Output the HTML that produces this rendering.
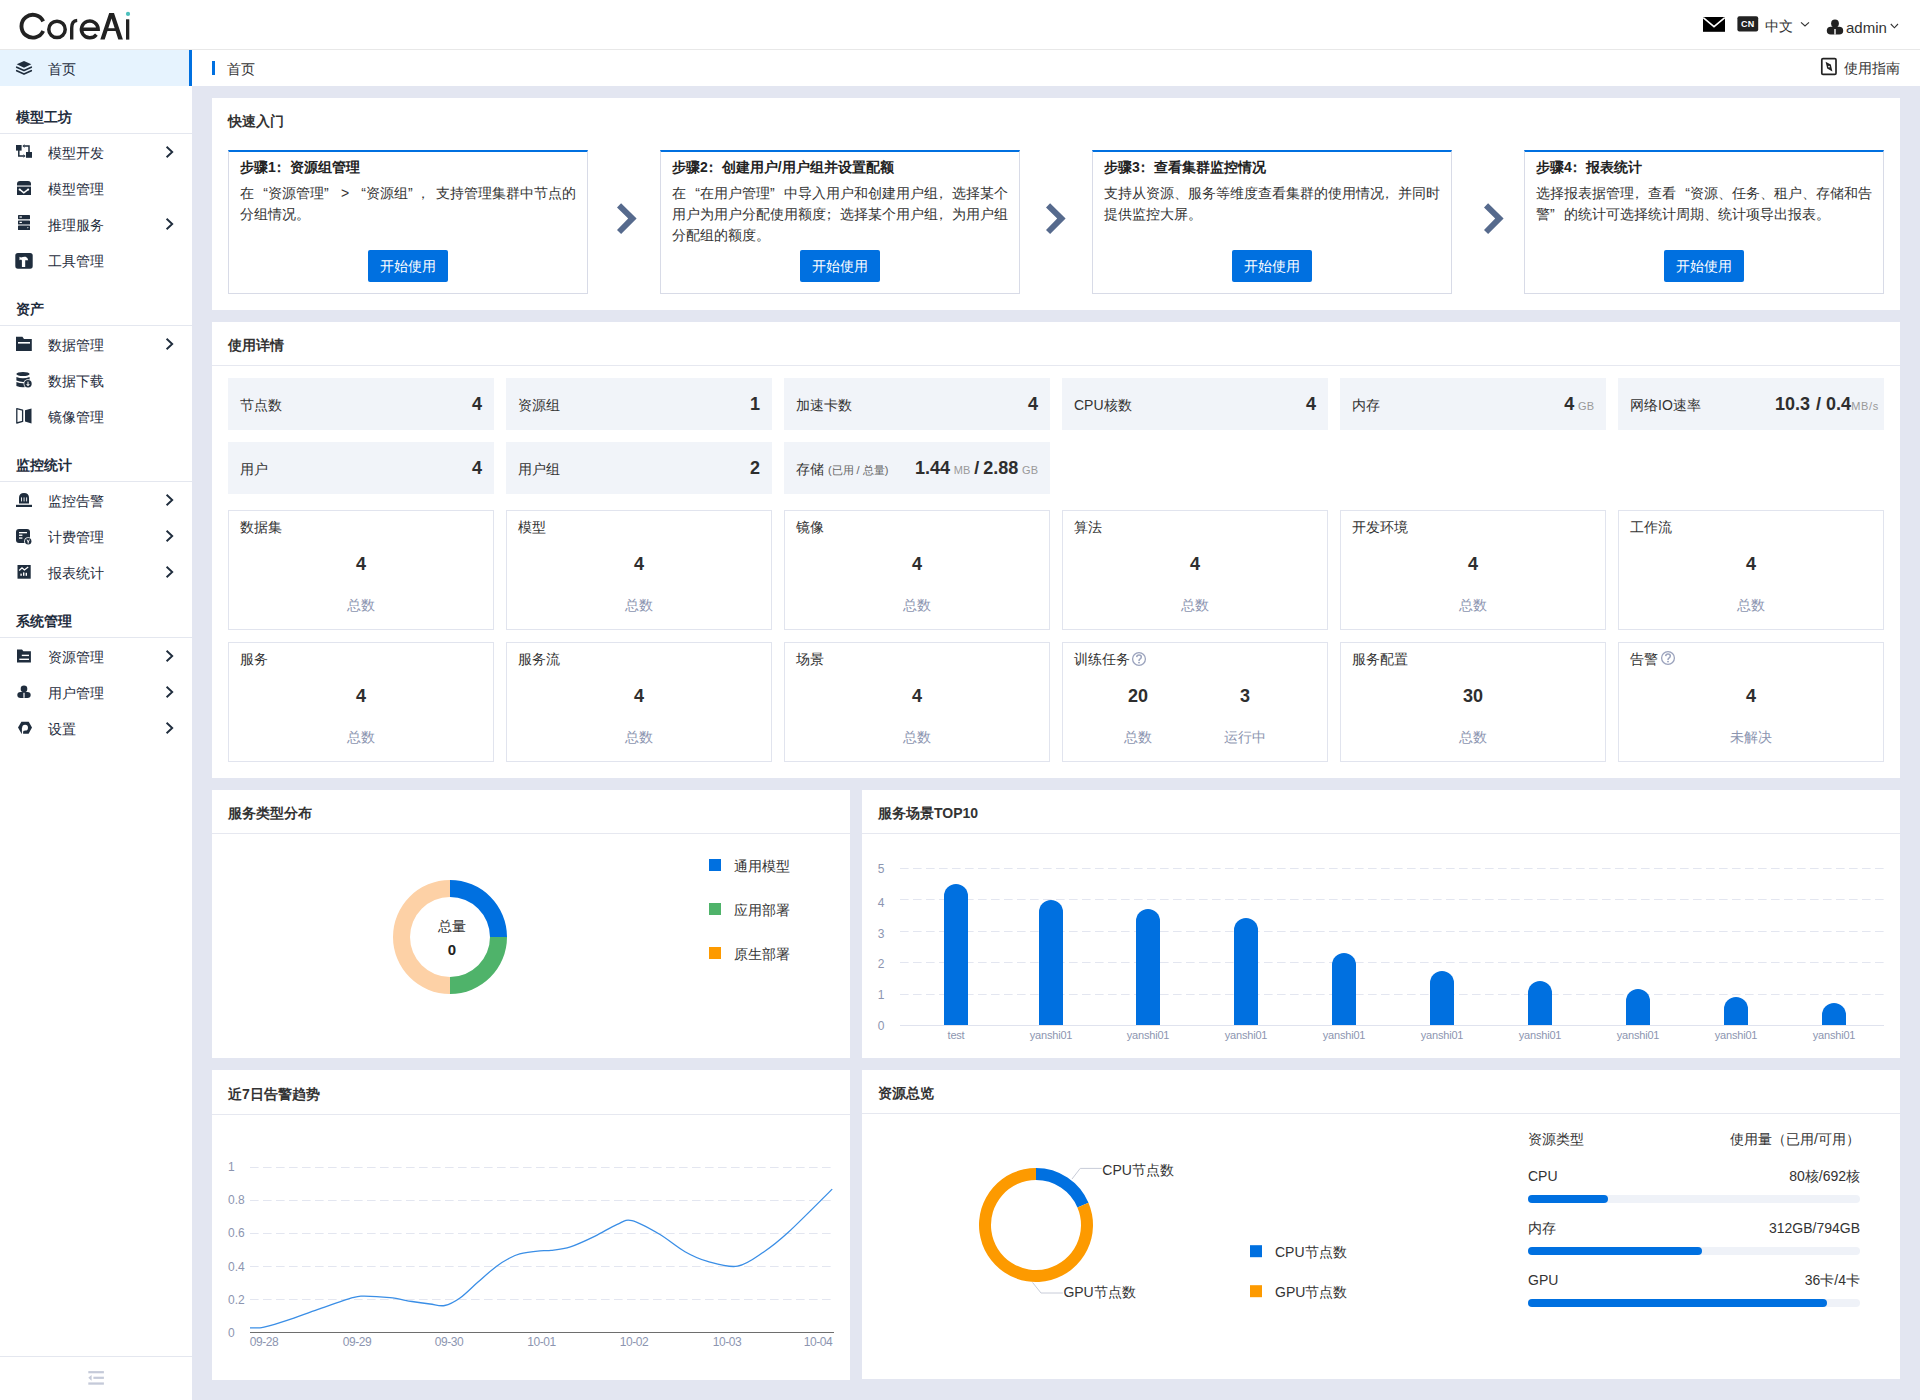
<!DOCTYPE html><html><head><meta charset="utf-8"><style>
*{margin:0;padding:0;box-sizing:border-box}
html,body{width:1920px;height:1400px;overflow:hidden}
body{position:relative;background:#e3e6f1;font-family:"Liberation Sans",sans-serif;font-size:14px;color:#333}
.t{position:absolute;white-space:nowrap}
.r{position:absolute}
svg{position:absolute;overflow:visible}
.q{display:inline-block;width:14px}
.ql{text-align:right}
.qr{text-align:left}
</style></head><body>
<div class="r" style="left:0px;top:0px;width:1920px;height:49px;background:#fff;"></div>
<div class="r" style="left:0px;top:49px;width:1920px;height:1px;background:#e8e8e8;"></div>
<svg style="left:0;top:0" width="200" height="50" viewBox="0 0 200 50">
<g fill="none" stroke="#222">
<path d="M43.2,21.4 A11.4,11.4 0 1 0 43.2,31.0" stroke-width="3.9"/>
<circle cx="57" cy="29.4" r="8.2" stroke-width="3.5"/>
<path d="M71.7,39.6 V28 C71.7,22.6 74,20.6 77.2,20.4" stroke-width="3.4"/>
<path d="M81.6,29.2 H98.2 A8.4,8.4 0 1 0 96.4,34.6" stroke-width="3.4"/>
</g>
<path fill="#222" fill-rule="evenodd" d="M100.3,39.6 L109.2,12.9 L114,12.9 L122.9,39.6 L118.3,39.6 L115.6,31 L107.5,31 L104.7,39.6 Z M108.3,28.2 L114.7,28.2 L111.5,18.6 Z"/>
<rect x="126" y="19.3" width="3.3" height="20.3" fill="#222"/>
<circle cx="128" cy="13.9" r="2.1" fill="#4cc0bd"/>
</svg>
<svg style="left:1700px;top:14px" width="30" height="22" viewBox="1700 14 30 22">
<rect x="1703" y="17" width="22" height="14.8" fill="#000"/>
<path d="M1703.2,17.6 L1714,26.6 L1724.8,17.6" fill="none" stroke="#fff" stroke-width="1.6"/>
</svg>
<svg style="left:1735px;top:14px" width="26" height="20" viewBox="1735 14 26 20">
<rect x="1737.4" y="16.2" width="20.8" height="15.3" rx="2" fill="#222"/>
<text x="1747.8" y="27.2" font-size="9" font-weight="bold" fill="#fff" text-anchor="middle" font-family="Liberation Sans" letter-spacing="0.3">CN</text>
</svg>
<div class="t" style="left:1765px;top:15.5px;font-size:14px;line-height:20px;color:#333;font-weight:normal;">中文</div>
<svg style="left:1798px;top:20px" width="14" height="10" viewBox="1798 20 14 10">
<path d="M1801,22.3 L1805,26 L1809,22.3" fill="none" stroke="#333" stroke-width="1.1"/>
</svg>
<svg style="left:1825px;top:17px" width="20" height="20" viewBox="1825 17 20 20">
<circle cx="1835" cy="23.4" r="3.9" fill="#222"/>
<path d="M1830.8,26.8 H1839.2 A4,4 0 0 1 1843.2,30.8 A4,3.8 0 0 1 1839.2,34.6 H1830.8 A4,3.8 0 0 1 1826.8,30.8 A4,4 0 0 1 1830.8,26.8 Z" fill="#222"/>
<rect x="1834.3" y="29" width="1.4" height="5.6" fill="#fff"/>
</svg>
<div class="t" style="left:1846px;top:17.8px;font-size:15px;line-height:20px;color:#333;font-weight:normal;">admin</div>
<svg style="left:1888px;top:21px" width="12" height="10" viewBox="1888 21 12 10">
<path d="M1890.8,24 L1894.4,27.8 L1898,24" fill="none" stroke="#333" stroke-width="1.1"/>
</svg>
<div class="r" style="left:0px;top:50px;width:192px;height:1350px;background:#fff;"></div>
<div class="r" style="left:0px;top:50px;width:189px;height:36px;background:#e6f3fe;"></div>
<div class="r" style="left:189px;top:50px;width:3px;height:36px;background:#0070e0;"></div>
<svg style="left:0;top:50px" width="40" height="36" viewBox="0 50 40 36"><g fill="#1f2d3d"><path d="M24,60.9 L31.3,64.3 L24,67.7 L16.7,64.3 Z"/><path d="M16.7,67.2 L24,70.6 L31.3,67.2" fill="none" stroke="#1f2d3d" stroke-width="1.6" stroke-linejoin="round" stroke-linecap="round"/><path d="M16.7,70.7 L24,74.1 L31.3,70.7" fill="none" stroke="#1f2d3d" stroke-width="1.6" stroke-linejoin="round" stroke-linecap="round"/></g></svg>
<div class="t" style="left:48px;top:58.5px;font-size:14px;line-height:20px;color:#1f2d3d;font-weight:normal;">首页</div>
<div class="t" style="left:16px;top:107.0px;font-size:14px;line-height:20px;color:#1f2d3d;font-weight:bold;">模型工坊</div>
<div class="r" style="left:0px;top:133px;width:192px;height:1px;background:#e4e7ef;"></div>
<svg style="left:0;top:134px" width="40" height="36" viewBox="0 134 40 36"><g fill="#1f2d3d"><rect x="16" y="145" width="5.6" height="5.6"/><rect x="26" y="152" width="6" height="5.8"/><path d="M18.8,150 V156 H23.6" fill="none" stroke="#1f2d3d" stroke-width="1.5"/><path d="M23.4,154.3 L25.6,156 L23.4,157.7 Z"/><path d="M29,152 V146 H24.4" fill="none" stroke="#1f2d3d" stroke-width="1.5"/><path d="M24.6,144.3 L22.4,146 L24.6,147.7 Z"/></g></svg>
<div class="t" style="left:48px;top:142.5px;font-size:14px;line-height:20px;color:#1f2d3d;font-weight:normal;">模型开发</div>
<svg style="left:160px;top:144px" width="20" height="16" viewBox="160 144 20 16"><path d="M166.6,146.8 L172.2,152 L166.6,157.2" fill="none" stroke="#1f2d3d" stroke-width="1.9"/></svg>
<svg style="left:0;top:170px" width="40" height="36" viewBox="0 170 40 36"><g fill="#1f2d3d"><path d="M17,185.4 V184 Q17,181 20,181 H28 Q31,181 31,184 V185.4 Z"/><path d="M17,186.6 H31 V195 H17 Z"/><path d="M19.6,189.4 L23.8,192.8 L28.2,189.4" fill="none" stroke="#fff" stroke-width="1.5"/><circle cx="19.6" cy="189.4" r="1" fill="#fff"/><circle cx="28.2" cy="189.4" r="1" fill="#fff"/></g></svg>
<div class="t" style="left:48px;top:178.5px;font-size:14px;line-height:20px;color:#1f2d3d;font-weight:normal;">模型管理</div>
<svg style="left:0;top:206px" width="40" height="36" viewBox="0 206 40 36"><g fill="#1f2d3d"><rect x="18" y="215" width="12" height="4.2" rx="0.6"/><rect x="18" y="220.4" width="12" height="4.2" rx="0.6"/><rect x="18" y="225.6" width="12" height="4.4" rx="0.6"/><rect x="19.5" y="216.4" width="2.4" height="1.2" fill="#fff"/><rect x="19.5" y="221.8" width="2.4" height="1.2" fill="#fff"/><path d="M27,227.2 L28.6,227.2 L27.8,228.6 Z" fill="#fff"/></g></svg>
<div class="t" style="left:48px;top:214.5px;font-size:14px;line-height:20px;color:#1f2d3d;font-weight:normal;">推理服务</div>
<svg style="left:160px;top:216px" width="20" height="16" viewBox="160 216 20 16"><path d="M166.6,218.8 L172.2,224 L166.6,229.2" fill="none" stroke="#1f2d3d" stroke-width="1.9"/></svg>
<svg style="left:0;top:242px" width="40" height="36" viewBox="0 242 40 36"><g fill="#1f2d3d"><rect x="15.3" y="253" width="17.4" height="15.7" rx="2.6"/><path d="M19.5,256.8 L21,257.5 Q23.5,256.4 25.6,256.7 Q27.8,257.4 28.2,260.3 H21.8 L21,259.6 L19.5,260.2 Z" fill="#fff"/><rect x="21.9" y="260" width="3.3" height="7" fill="#fff"/></g></svg>
<div class="t" style="left:48px;top:250.5px;font-size:14px;line-height:20px;color:#1f2d3d;font-weight:normal;">工具管理</div>
<div class="t" style="left:16px;top:299.0px;font-size:14px;line-height:20px;color:#1f2d3d;font-weight:bold;">资产</div>
<div class="r" style="left:0px;top:325px;width:192px;height:1px;background:#e4e7ef;"></div>
<svg style="left:0;top:326px" width="40" height="36" viewBox="0 326 40 36"><g fill="#1f2d3d"><path d="M16,336.8 H22.4 L24,339 H31.8 V350.9 H16 Z"/><rect x="18" y="342" width="12" height="1.6" fill="#fff"/></g></svg>
<div class="t" style="left:48px;top:334.5px;font-size:14px;line-height:20px;color:#1f2d3d;font-weight:normal;">数据管理</div>
<svg style="left:160px;top:336px" width="20" height="16" viewBox="160 336 20 16"><path d="M166.6,338.8 L172.2,344 L166.6,349.2" fill="none" stroke="#1f2d3d" stroke-width="1.9"/></svg>
<svg style="left:0;top:362px" width="40" height="36" viewBox="0 362 40 36"><g fill="#1f2d3d"><ellipse cx="23" cy="374" rx="6.6" ry="2.1"/><path d="M16.4,377 Q23,379.6 29.6,377 V380.6 Q23,383.2 16.4,380.6 Z"/><path d="M16.4,382 Q23,384.6 29.6,382 V386 Q23,388.6 16.4,386 Z"/><circle cx="28" cy="383.7" r="4.5" fill="#fff"/><circle cx="28" cy="383.7" r="3.7"/><rect x="27.5" y="381.6" width="1" height="2.8" fill="#fff"/><path d="M26,384.2 H30 L28,386.2 Z" fill="#fff"/></g></svg>
<div class="t" style="left:48px;top:370.5px;font-size:14px;line-height:20px;color:#1f2d3d;font-weight:normal;">数据下载</div>
<svg style="left:0;top:398px" width="40" height="36" viewBox="0 398 40 36"><g fill="#1f2d3d"><path d="M16.8,408.6 L22.6,410.2 V421.4 L16.8,423 Z" fill="none" stroke="#1f2d3d" stroke-width="1.3" stroke-linejoin="round"/><path d="M25,410.2 L31.5,408.4 V423.6 L25,421.6 Z"/></g></svg>
<div class="t" style="left:48px;top:406.5px;font-size:14px;line-height:20px;color:#1f2d3d;font-weight:normal;">镜像管理</div>
<div class="t" style="left:16px;top:455.0px;font-size:14px;line-height:20px;color:#1f2d3d;font-weight:bold;">监控统计</div>
<div class="r" style="left:0px;top:481px;width:192px;height:1px;background:#e4e7ef;"></div>
<svg style="left:0;top:482px" width="40" height="36" viewBox="0 482 40 36"><g fill="#1f2d3d"><path d="M19,503.5 V498 Q19,493 24,493 Q29,493 29,498 V503.5 Z"/><rect x="16" y="504.8" width="16" height="2.2"/><rect x="21" y="497.4" width="0.9" height="4" fill="#fff"/><rect x="23.6" y="497.4" width="0.9" height="4" fill="#fff"/><rect x="26.2" y="497.4" width="0.9" height="4" fill="#fff"/></g></svg>
<div class="t" style="left:48px;top:490.5px;font-size:14px;line-height:20px;color:#1f2d3d;font-weight:normal;">监控告警</div>
<svg style="left:160px;top:492px" width="20" height="16" viewBox="160 492 20 16"><path d="M166.6,494.8 L172.2,500 L166.6,505.2" fill="none" stroke="#1f2d3d" stroke-width="1.9"/></svg>
<svg style="left:0;top:518px" width="40" height="36" viewBox="0 518 40 36"><g fill="#1f2d3d"><rect x="16" y="529" width="14" height="14" rx="3"/><rect x="19" y="532" width="8" height="1.3" fill="#fff"/><rect x="19" y="534.6" width="3.4" height="1.3" fill="#fff"/><rect x="19" y="537.4" width="3.4" height="1.3" fill="#fff"/><circle cx="28.2" cy="541.2" r="4" fill="#fff"/><circle cx="28.2" cy="541.2" r="3.2"/><path d="M27,539.6 L28.2,542.2 L29.4,539.6 M28.2,542 V543.6" fill="none" stroke="#fff" stroke-width="0.9"/></g></svg>
<div class="t" style="left:48px;top:526.5px;font-size:14px;line-height:20px;color:#1f2d3d;font-weight:normal;">计费管理</div>
<svg style="left:160px;top:528px" width="20" height="16" viewBox="160 528 20 16"><path d="M166.6,530.8 L172.2,536 L166.6,541.2" fill="none" stroke="#1f2d3d" stroke-width="1.9"/></svg>
<svg style="left:0;top:554px" width="40" height="36" viewBox="0 554 40 36"><g fill="#1f2d3d"><rect x="17.5" y="565" width="13.2" height="13.7"/><path d="M19.2,570.4 L22,567.8 L24.4,570 L28.2,567" fill="none" stroke="#fff" stroke-width="1.3"/><rect x="20.4" y="573.6" width="1.4" height="2.2" fill="#fff"/><rect x="23" y="572.4" width="1.4" height="3.4" fill="#fff"/><rect x="25.6" y="572.8" width="1.4" height="3" fill="#fff"/></g></svg>
<div class="t" style="left:48px;top:562.5px;font-size:14px;line-height:20px;color:#1f2d3d;font-weight:normal;">报表统计</div>
<svg style="left:160px;top:564px" width="20" height="16" viewBox="160 564 20 16"><path d="M166.6,566.8 L172.2,572 L166.6,577.2" fill="none" stroke="#1f2d3d" stroke-width="1.9"/></svg>
<div class="t" style="left:16px;top:611.0px;font-size:14px;line-height:20px;color:#1f2d3d;font-weight:bold;">系统管理</div>
<div class="r" style="left:0px;top:637px;width:192px;height:1px;background:#e4e7ef;"></div>
<svg style="left:0;top:638px" width="40" height="36" viewBox="0 638 40 36"><g fill="#1f2d3d"><path d="M17,649.4 H22 L23.4,651.2 H30.9 V662.4 H17 Z"/><rect x="21.8" y="654.7" width="7.2" height="1.4" fill="#fff"/><rect x="19.3" y="658.6" width="9.7" height="1.4" fill="#fff"/></g></svg>
<div class="t" style="left:48px;top:646.5px;font-size:14px;line-height:20px;color:#1f2d3d;font-weight:normal;">资源管理</div>
<svg style="left:160px;top:648px" width="20" height="16" viewBox="160 648 20 16"><path d="M166.6,650.8 L172.2,656 L166.6,661.2" fill="none" stroke="#1f2d3d" stroke-width="1.9"/></svg>
<svg style="left:0;top:674px" width="40" height="36" viewBox="0 674 40 36"><g fill="#1f2d3d"><circle cx="24" cy="688.9" r="3.3"/><path d="M20.6,691.9 H27.4 A3.3,3 0 0 1 30.7,694.9 A3.3,3 0 0 1 27.4,697.9 H20.6 A3.3,3 0 0 1 17.3,694.9 A3.3,3 0 0 1 20.6,691.9 Z"/><rect x="23.4" y="692.8" width="1.2" height="5" fill="#fff"/></g></svg>
<div class="t" style="left:48px;top:682.5px;font-size:14px;line-height:20px;color:#1f2d3d;font-weight:normal;">用户管理</div>
<svg style="left:160px;top:684px" width="20" height="16" viewBox="160 684 20 16"><path d="M166.6,686.8 L172.2,692 L166.6,697.2" fill="none" stroke="#1f2d3d" stroke-width="1.9"/></svg>
<svg style="left:0;top:710px" width="40" height="36" viewBox="0 710 40 36"><g fill="#1f2d3d"><path d="M21.4,721.8 H28.7 L32,727.6 L28.6,733.7 H21.6 L18,727.6 Z"/><circle cx="25.1" cy="727.7" r="2.9" fill="#fff"/><path d="M21.9,727.7 H23.1 V734 H21.9 Z" fill="#fff"/><path d="M23.1,729.6 L24.8,730.6 L23.1,731.4 Z" fill="#fff"/></g></svg>
<div class="t" style="left:48px;top:718.5px;font-size:14px;line-height:20px;color:#1f2d3d;font-weight:normal;">设置</div>
<svg style="left:160px;top:720px" width="20" height="16" viewBox="160 720 20 16"><path d="M166.6,722.8 L172.2,728 L166.6,733.2" fill="none" stroke="#1f2d3d" stroke-width="1.9"/></svg>
<div class="r" style="left:0px;top:1356px;width:192px;height:1px;background:#e4e7ef;"></div>
<svg style="left:80px;top:1368px" width="30" height="20" viewBox="80 1368 30 20">
<g fill="#c5cad9"><rect x="88.3" y="1371.1" width="15.6" height="2.2"/><rect x="93.4" y="1376.7" width="10.5" height="2.2"/><rect x="88.3" y="1382.4" width="15.6" height="2.3"/><path d="M88.3,1377.8 L91.6,1374.9 V1380.7 Z"/></g>
</svg>
<div class="r" style="left:192px;top:50px;width:1728px;height:36px;background:#fff;"></div>
<div class="r" style="left:212px;top:61px;width:3px;height:14px;background:#0070e0;"></div>
<div class="t" style="left:227px;top:58.5px;font-size:14px;line-height:20px;color:#333;font-weight:normal;">首页</div>
<svg style="left:1818px;top:55px" width="22" height="24" viewBox="1818 55 22 24">
<rect x="1821.8" y="58.6" width="14.2" height="15.8" rx="1.2" fill="none" stroke="#222" stroke-width="1.7"/>
<path d="M1825.6,61.8 L1830.8,64.6 L1832.4,71.6 L1827.2,68.6 Z" fill="#222"/><circle cx="1829" cy="66.6" r="0.9" fill="#fff"/>
</svg>
<div class="t" style="left:1844px;top:57.5px;font-size:14px;line-height:20px;color:#333;font-weight:normal;">使用指南</div>
<div class="r" style="left:212px;top:98px;width:1688px;height:212px;background:#fff;"></div>
<div class="t" style="left:228px;top:110.5px;font-size:14px;line-height:20px;color:#333;font-weight:bold;">快速入门</div>
<div class="r" style="left:228px;top:150px;width:360px;height:144px;background:#fff;border:1px solid #d8dbe7;border-top:2px solid #0070e0;"></div>
<div class="t" style="left:240px;top:157.0px;font-size:14px;line-height:20px;color:#222;font-weight:bold;">步骤1<span style="position:relative;left:-4px">：</span>资源组管理</div>
<div class="t" style="left:240px;top:182.5px;font-size:14px;line-height:21px;color:#333;font-weight:normal;">在<span class="q ql">“</span>资源管理<span class="q qr">”</span><span class="q" style="text-align:center">&gt;</span><span class="q ql">“</span>资源组<span class="q qr">”</span><span class="q" style="position:relative;left:-2px"><span style="position:relative;left:-4px">，</span></span>支持管理集群中节点的</div>
<div class="t" style="left:240px;top:203.5px;font-size:14px;line-height:21px;color:#333;font-weight:normal;">分组情况。</div>
<div class="r" style="left:368px;top:250px;width:80px;height:32px;background:#0070e0;border-radius:2px;"></div>
<div class="t" style="left:368.0px;width:80px;text-align:center;top:256.0px;font-size:14px;line-height:20px;color:#fff;font-weight:normal;">开始使用</div>
<svg style="left:612.4px;top:198px" width="30" height="42" viewBox="612.4 198 30 42"><path d="M621.5,203.2 L637.0,218.6 L621.5,234.1 L617.4,230.1 L628.6,218.6 L617.4,207.4 Z" fill="#566a8d"/></svg>
<div class="r" style="left:660px;top:150px;width:360px;height:144px;background:#fff;border:1px solid #d8dbe7;border-top:2px solid #0070e0;"></div>
<div class="t" style="left:672px;top:157.0px;font-size:14px;line-height:20px;color:#222;font-weight:bold;">步骤2<span style="position:relative;left:-4px">：</span>创建用户/用户组并设置配额</div>
<div class="t" style="left:672px;top:182.5px;font-size:14px;line-height:21px;color:#333;font-weight:normal;">在<span class="q ql">“</span>在用户管理<span class="q qr">”</span>中导入用户和创建用户组<span style="position:relative;left:-4px">，</span>选择某个</div>
<div class="t" style="left:672px;top:203.5px;font-size:14px;line-height:21px;color:#333;font-weight:normal;">用户为用户分配使用额度<span style="position:relative;left:-4px">；</span>选择某个用户组<span style="position:relative;left:-4px">，</span>为用户组</div>
<div class="t" style="left:672px;top:224.5px;font-size:14px;line-height:21px;color:#333;font-weight:normal;">分配组的额度。</div>
<div class="r" style="left:800px;top:250px;width:80px;height:32px;background:#0070e0;border-radius:2px;"></div>
<div class="t" style="left:800.0px;width:80px;text-align:center;top:256.0px;font-size:14px;line-height:20px;color:#fff;font-weight:normal;">开始使用</div>
<svg style="left:1041.4px;top:198px" width="30" height="42" viewBox="1041.4 198 30 42"><path d="M1050.5,203.2 L1066.0,218.6 L1050.5,234.1 L1046.4,230.1 L1057.6000000000001,218.6 L1046.4,207.4 Z" fill="#566a8d"/></svg>
<div class="r" style="left:1092px;top:150px;width:360px;height:144px;background:#fff;border:1px solid #d8dbe7;border-top:2px solid #0070e0;"></div>
<div class="t" style="left:1104px;top:157.0px;font-size:14px;line-height:20px;color:#222;font-weight:bold;">步骤3<span style="position:relative;left:-4px">：</span>查看集群监控情况</div>
<div class="t" style="left:1104px;top:182.5px;font-size:14px;line-height:21px;color:#333;font-weight:normal;">支持从资源、服务等维度查看集群的使用情况<span style="position:relative;left:-4px">，</span>并同时</div>
<div class="t" style="left:1104px;top:203.5px;font-size:14px;line-height:21px;color:#333;font-weight:normal;">提供监控大屏。</div>
<div class="r" style="left:1232px;top:250px;width:80px;height:32px;background:#0070e0;border-radius:2px;"></div>
<div class="t" style="left:1232.0px;width:80px;text-align:center;top:256.0px;font-size:14px;line-height:20px;color:#fff;font-weight:normal;">开始使用</div>
<svg style="left:1479.3px;top:198px" width="30" height="42" viewBox="1479.3 198 30 42"><path d="M1488.3999999999999,203.2 L1503.8999999999999,218.6 L1488.3999999999999,234.1 L1484.3,230.1 L1495.5,218.6 L1484.3,207.4 Z" fill="#566a8d"/></svg>
<div class="r" style="left:1524px;top:150px;width:360px;height:144px;background:#fff;border:1px solid #d8dbe7;border-top:2px solid #0070e0;"></div>
<div class="t" style="left:1536px;top:157.0px;font-size:14px;line-height:20px;color:#222;font-weight:bold;">步骤4<span style="position:relative;left:-4px">：</span>报表统计</div>
<div class="t" style="left:1536px;top:182.5px;font-size:14px;line-height:21px;color:#333;font-weight:normal;">选择报表据管理<span style="position:relative;left:-4px">，</span>查看<span class="q ql">“</span>资源、任务、租户、存储和告</div>
<div class="t" style="left:1536px;top:203.5px;font-size:14px;line-height:21px;color:#333;font-weight:normal;">警<span class="q qr">”</span>的统计可选择统计周期、统计项导出报表。</div>
<div class="r" style="left:1664px;top:250px;width:80px;height:32px;background:#0070e0;border-radius:2px;"></div>
<div class="t" style="left:1664.0px;width:80px;text-align:center;top:256.0px;font-size:14px;line-height:20px;color:#fff;font-weight:normal;">开始使用</div>
<div class="r" style="left:212px;top:322px;width:1688px;height:456px;background:#fff;"></div>
<div class="t" style="left:228px;top:335.0px;font-size:14px;line-height:20px;color:#333;font-weight:bold;">使用详情</div>
<div class="r" style="left:212px;top:365px;width:1688px;height:1px;background:#e6e8f0;"></div>
<div class="r" style="left:228px;top:378px;width:266px;height:52px;background:#f1f4f9;"></div>
<div class="t" style="left:240px;top:395.0px;font-size:14px;line-height:20px;color:#333;font-weight:normal;">节点数</div>
<div class="t" style="left:232px;width:250px;text-align:right;top:392.0px;font-size:14px;line-height:24px;color:#333;font-weight:normal;"><span style="font-size:18px;font-weight:bold;color:#2e2e2e">4</span></div>
<div class="r" style="left:506px;top:378px;width:266px;height:52px;background:#f1f4f9;"></div>
<div class="t" style="left:518px;top:395.0px;font-size:14px;line-height:20px;color:#333;font-weight:normal;">资源组</div>
<div class="t" style="left:510px;width:250px;text-align:right;top:392.0px;font-size:14px;line-height:24px;color:#333;font-weight:normal;"><span style="font-size:18px;font-weight:bold;color:#2e2e2e">1</span></div>
<div class="r" style="left:784px;top:378px;width:266px;height:52px;background:#f1f4f9;"></div>
<div class="t" style="left:796px;top:395.0px;font-size:14px;line-height:20px;color:#333;font-weight:normal;">加速卡数</div>
<div class="t" style="left:788px;width:250px;text-align:right;top:392.0px;font-size:14px;line-height:24px;color:#333;font-weight:normal;"><span style="font-size:18px;font-weight:bold;color:#2e2e2e">4</span></div>
<div class="r" style="left:1062px;top:378px;width:266px;height:52px;background:#f1f4f9;"></div>
<div class="t" style="left:1074px;top:395.0px;font-size:14px;line-height:20px;color:#333;font-weight:normal;">CPU核数</div>
<div class="t" style="left:1066px;width:250px;text-align:right;top:392.0px;font-size:14px;line-height:24px;color:#333;font-weight:normal;"><span style="font-size:18px;font-weight:bold;color:#2e2e2e">4</span></div>
<div class="r" style="left:1340px;top:378px;width:266px;height:52px;background:#f1f4f9;"></div>
<div class="t" style="left:1352px;top:395.0px;font-size:14px;line-height:20px;color:#333;font-weight:normal;">内存</div>
<div class="t" style="left:1344px;width:250px;text-align:right;top:392.0px;font-size:14px;line-height:24px;color:#333;font-weight:normal;"><span style="font-size:18px;font-weight:bold;color:#2e2e2e">4</span> <span style="font-size:11px;color:#999">GB</span></div>
<div class="r" style="left:1618px;top:378px;width:266px;height:52px;background:#f1f4f9;"></div>
<div class="t" style="left:1630px;top:395.0px;font-size:14px;line-height:20px;color:#333;font-weight:normal;">网络IO速率</div>
<div class="t" style="left:1629px;width:250px;text-align:right;top:392.0px;font-size:14px;line-height:24px;color:#333;font-weight:normal;"><span style="font-size:18px;font-weight:bold;color:#2e2e2e">10.3</span><span style="display:inline-block;width:6px"></span><span style="font-size:18px;font-weight:bold;color:#2e2e2e">/</span><span style="display:inline-block;width:5px"></span><span style="font-size:18px;font-weight:bold;color:#2e2e2e">0.4</span><span style="font-size:11px;color:#999;letter-spacing:0.7px">MB/s</span></div>
<div class="r" style="left:228px;top:442px;width:266px;height:52px;background:#f1f4f9;"></div>
<div class="t" style="left:240px;top:459.0px;font-size:14px;line-height:20px;color:#333;font-weight:normal;">用户</div>
<div class="t" style="left:232px;width:250px;text-align:right;top:456.0px;font-size:14px;line-height:24px;color:#333;font-weight:normal;"><span style="font-size:18px;font-weight:bold;color:#2e2e2e">4</span></div>
<div class="r" style="left:506px;top:442px;width:266px;height:52px;background:#f1f4f9;"></div>
<div class="t" style="left:518px;top:459.0px;font-size:14px;line-height:20px;color:#333;font-weight:normal;">用户组</div>
<div class="t" style="left:510px;width:250px;text-align:right;top:456.0px;font-size:14px;line-height:24px;color:#333;font-weight:normal;"><span style="font-size:18px;font-weight:bold;color:#2e2e2e">2</span></div>
<div class="r" style="left:784px;top:442px;width:266px;height:52px;background:#f1f4f9;"></div>
<div class="t" style="left:796px;top:459.0px;font-size:14px;line-height:20px;color:#333;font-weight:normal;">存储 <span style="font-size:11px;color:#666">(已用 / 总量)</span></div>
<div class="t" style="left:788px;width:250px;text-align:right;top:456.0px;font-size:14px;line-height:24px;color:#333;font-weight:normal;"><span style="font-size:18px;font-weight:bold;color:#2e2e2e">1.44</span> <span style="font-size:11px;color:#999">MB</span> <span style="font-size:18px;font-weight:bold;color:#2e2e2e">/</span>&nbsp;<span style="font-size:18px;font-weight:bold;color:#2e2e2e">2.88</span> <span style="font-size:11px;color:#999">GB</span></div>
<div class="r" style="left:228px;top:510px;width:266px;height:120px;background:#fff;border:1px solid #e1e4ee;"></div>
<div class="t" style="left:240px;top:517.0px;font-size:14px;line-height:20px;color:#333;font-weight:normal;">数据集</div>
<div class="t" style="left:261.0px;width:200px;text-align:center;top:552.0px;font-size:18px;line-height:24px;color:#2e2e2e;font-weight:bold;">4</div>
<div class="t" style="left:261.0px;width:200px;text-align:center;top:594.5px;font-size:14px;line-height:20px;color:#8c95b0;font-weight:normal;">总数</div>
<div class="r" style="left:506px;top:510px;width:266px;height:120px;background:#fff;border:1px solid #e1e4ee;"></div>
<div class="t" style="left:518px;top:517.0px;font-size:14px;line-height:20px;color:#333;font-weight:normal;">模型</div>
<div class="t" style="left:539.0px;width:200px;text-align:center;top:552.0px;font-size:18px;line-height:24px;color:#2e2e2e;font-weight:bold;">4</div>
<div class="t" style="left:539.0px;width:200px;text-align:center;top:594.5px;font-size:14px;line-height:20px;color:#8c95b0;font-weight:normal;">总数</div>
<div class="r" style="left:784px;top:510px;width:266px;height:120px;background:#fff;border:1px solid #e1e4ee;"></div>
<div class="t" style="left:796px;top:517.0px;font-size:14px;line-height:20px;color:#333;font-weight:normal;">镜像</div>
<div class="t" style="left:817.0px;width:200px;text-align:center;top:552.0px;font-size:18px;line-height:24px;color:#2e2e2e;font-weight:bold;">4</div>
<div class="t" style="left:817.0px;width:200px;text-align:center;top:594.5px;font-size:14px;line-height:20px;color:#8c95b0;font-weight:normal;">总数</div>
<div class="r" style="left:1062px;top:510px;width:266px;height:120px;background:#fff;border:1px solid #e1e4ee;"></div>
<div class="t" style="left:1074px;top:517.0px;font-size:14px;line-height:20px;color:#333;font-weight:normal;">算法</div>
<div class="t" style="left:1095.0px;width:200px;text-align:center;top:552.0px;font-size:18px;line-height:24px;color:#2e2e2e;font-weight:bold;">4</div>
<div class="t" style="left:1095.0px;width:200px;text-align:center;top:594.5px;font-size:14px;line-height:20px;color:#8c95b0;font-weight:normal;">总数</div>
<div class="r" style="left:1340px;top:510px;width:266px;height:120px;background:#fff;border:1px solid #e1e4ee;"></div>
<div class="t" style="left:1352px;top:517.0px;font-size:14px;line-height:20px;color:#333;font-weight:normal;">开发环境</div>
<div class="t" style="left:1373.0px;width:200px;text-align:center;top:552.0px;font-size:18px;line-height:24px;color:#2e2e2e;font-weight:bold;">4</div>
<div class="t" style="left:1373.0px;width:200px;text-align:center;top:594.5px;font-size:14px;line-height:20px;color:#8c95b0;font-weight:normal;">总数</div>
<div class="r" style="left:1618px;top:510px;width:266px;height:120px;background:#fff;border:1px solid #e1e4ee;"></div>
<div class="t" style="left:1630px;top:517.0px;font-size:14px;line-height:20px;color:#333;font-weight:normal;">工作流</div>
<div class="t" style="left:1651.0px;width:200px;text-align:center;top:552.0px;font-size:18px;line-height:24px;color:#2e2e2e;font-weight:bold;">4</div>
<div class="t" style="left:1651.0px;width:200px;text-align:center;top:594.5px;font-size:14px;line-height:20px;color:#8c95b0;font-weight:normal;">总数</div>
<div class="r" style="left:228px;top:642px;width:266px;height:120px;background:#fff;border:1px solid #e1e4ee;"></div>
<div class="t" style="left:240px;top:649.0px;font-size:14px;line-height:20px;color:#333;font-weight:normal;">服务</div>
<div class="t" style="left:261.0px;width:200px;text-align:center;top:684.0px;font-size:18px;line-height:24px;color:#2e2e2e;font-weight:bold;">4</div>
<div class="t" style="left:261.0px;width:200px;text-align:center;top:726.5px;font-size:14px;line-height:20px;color:#8c95b0;font-weight:normal;">总数</div>
<div class="r" style="left:506px;top:642px;width:266px;height:120px;background:#fff;border:1px solid #e1e4ee;"></div>
<div class="t" style="left:518px;top:649.0px;font-size:14px;line-height:20px;color:#333;font-weight:normal;">服务流</div>
<div class="t" style="left:539.0px;width:200px;text-align:center;top:684.0px;font-size:18px;line-height:24px;color:#2e2e2e;font-weight:bold;">4</div>
<div class="t" style="left:539.0px;width:200px;text-align:center;top:726.5px;font-size:14px;line-height:20px;color:#8c95b0;font-weight:normal;">总数</div>
<div class="r" style="left:784px;top:642px;width:266px;height:120px;background:#fff;border:1px solid #e1e4ee;"></div>
<div class="t" style="left:796px;top:649.0px;font-size:14px;line-height:20px;color:#333;font-weight:normal;">场景</div>
<div class="t" style="left:817.0px;width:200px;text-align:center;top:684.0px;font-size:18px;line-height:24px;color:#2e2e2e;font-weight:bold;">4</div>
<div class="t" style="left:817.0px;width:200px;text-align:center;top:726.5px;font-size:14px;line-height:20px;color:#8c95b0;font-weight:normal;">总数</div>
<div class="r" style="left:1062px;top:642px;width:266px;height:120px;background:#fff;border:1px solid #e1e4ee;"></div>
<div class="t" style="left:1074px;top:649.0px;font-size:14px;line-height:20px;color:#333;font-weight:normal;">训练任务</div>
<div class="t" style="left:1098.0px;width:80px;text-align:center;top:684.0px;font-size:18px;line-height:24px;color:#2e2e2e;font-weight:bold;">20</div>
<div class="t" style="left:1205.0px;width:80px;text-align:center;top:684.0px;font-size:18px;line-height:24px;color:#2e2e2e;font-weight:bold;">3</div>
<div class="t" style="left:1098.0px;width:80px;text-align:center;top:726.5px;font-size:14px;line-height:20px;color:#8c95b0;font-weight:normal;">总数</div>
<div class="t" style="left:1205.0px;width:80px;text-align:center;top:726.5px;font-size:14px;line-height:20px;color:#8c95b0;font-weight:normal;">运行中</div>
<div class="r" style="left:1340px;top:642px;width:266px;height:120px;background:#fff;border:1px solid #e1e4ee;"></div>
<div class="t" style="left:1352px;top:649.0px;font-size:14px;line-height:20px;color:#333;font-weight:normal;">服务配置</div>
<div class="t" style="left:1373.0px;width:200px;text-align:center;top:684.0px;font-size:18px;line-height:24px;color:#2e2e2e;font-weight:bold;">30</div>
<div class="t" style="left:1373.0px;width:200px;text-align:center;top:726.5px;font-size:14px;line-height:20px;color:#8c95b0;font-weight:normal;">总数</div>
<div class="r" style="left:1618px;top:642px;width:266px;height:120px;background:#fff;border:1px solid #e1e4ee;"></div>
<div class="t" style="left:1630px;top:649.0px;font-size:14px;line-height:20px;color:#333;font-weight:normal;">告警</div>
<div class="t" style="left:1651.0px;width:200px;text-align:center;top:684.0px;font-size:18px;line-height:24px;color:#2e2e2e;font-weight:bold;">4</div>
<div class="t" style="left:1651.0px;width:200px;text-align:center;top:726.5px;font-size:14px;line-height:20px;color:#8c95b0;font-weight:normal;">未解决</div>
<svg style="left:1130px;top:650px" width="18" height="18" viewBox="1130 650 18 18"><circle cx="1139" cy="659" r="6.4" fill="none" stroke="#9ba3bd" stroke-width="1.3"/><path d="M1136.7,657.1 Q1136.9,655.1 1139,655.1 Q1141.3,655.1 1141.3,657 Q1141.3,658.2 1139.9,659.1 Q1139,659.7 1139,660.9" fill="none" stroke="#9ba3bd" stroke-width="1.5"/><circle cx="1139" cy="662.6" r="0.95" fill="#9ba3bd"/></svg>
<svg style="left:1659px;top:649px" width="18" height="18" viewBox="1659 649 18 18"><circle cx="1668" cy="658" r="6.4" fill="none" stroke="#9ba3bd" stroke-width="1.3"/><path d="M1665.7,656.1 Q1665.9,654.1 1668,654.1 Q1670.3,654.1 1670.3,656 Q1670.3,657.2 1668.9,658.1 Q1668,658.7 1668,659.9" fill="none" stroke="#9ba3bd" stroke-width="1.5"/><circle cx="1668" cy="661.6" r="0.95" fill="#9ba3bd"/></svg>
<div class="r" style="left:212px;top:790px;width:638px;height:268px;background:#fff;"></div>
<div class="t" style="left:228px;top:802.5px;font-size:14px;line-height:20px;color:#333;font-weight:bold;">服务类型分布</div>
<div class="r" style="left:212px;top:833px;width:638px;height:1px;background:#e6e8f0;"></div>
<div class="r" style="left:862px;top:790px;width:1038px;height:268px;background:#fff;"></div>
<div class="t" style="left:878px;top:802.5px;font-size:14px;line-height:20px;color:#333;font-weight:bold;">服务场景TOP10</div>
<div class="r" style="left:862px;top:833px;width:1038px;height:1px;background:#e6e8f0;"></div>
<div class="r" style="left:212px;top:1070px;width:638px;height:310px;background:#fff;"></div>
<div class="t" style="left:228px;top:1083.5px;font-size:14px;line-height:20px;color:#333;font-weight:bold;">近7日告警趋势</div>
<div class="r" style="left:212px;top:1114px;width:638px;height:1px;background:#e6e8f0;"></div>
<div class="r" style="left:862px;top:1070px;width:1038px;height:309px;background:#fff;"></div>
<div class="t" style="left:878px;top:1083.0px;font-size:14px;line-height:20px;color:#333;font-weight:bold;">资源总览</div>
<div class="r" style="left:862px;top:1113px;width:1038px;height:1px;background:#e6e8f0;"></div>
<svg style="left:0;top:0" width="1920" height="1400" viewBox="0 0 1920 1400">
<path d="M450.00,880.00 A57,57 0 0 1 507.00,937.00 L490.00,937.00 A40,40 0 0 0 450.00,897.00 Z" fill="#0070e0"/>
<path d="M507.00,937.00 A57,57 0 0 1 450.00,994.00 L450.00,977.00 A40,40 0 0 0 490.00,937.00 Z" fill="#4fb36a"/>
<path d="M450.00,994.00 A57,57 0 0 1 449.99,880.00 L449.99,897.00 A40,40 0 0 0 450.00,977.00 Z" fill="#fdd1a6"/>
<rect x="709" y="859" width="12" height="12" fill="#0070e0"/>
<rect x="709" y="903" width="12" height="12" fill="#4fb36a"/>
<rect x="709" y="947" width="12" height="12" fill="#fd9a00"/>
</svg>
<div class="t" style="left:734px;top:855.5px;font-size:14px;line-height:20px;color:#333;font-weight:normal;">通用模型</div>
<div class="t" style="left:734px;top:899.5px;font-size:14px;line-height:20px;color:#333;font-weight:normal;">应用部署</div>
<div class="t" style="left:734px;top:943.5px;font-size:14px;line-height:20px;color:#333;font-weight:normal;">原生部署</div>
<div class="t" style="left:422.0px;width:60px;text-align:center;top:916.0px;font-size:14px;line-height:20px;color:#333;font-weight:normal;">总量</div>
<div class="t" style="left:422.0px;width:60px;text-align:center;top:939.5px;font-size:15px;line-height:20px;color:#222;font-weight:bold;">0</div>
<svg style="left:0;top:0" width="1920" height="1400" viewBox="0 0 1920 1400">
<line x1="900" y1="868.5" x2="1884" y2="868.5" stroke="#e3e6f0" stroke-width="1" stroke-dasharray="8.6,4.4"/>
<line x1="900" y1="899.5" x2="1884" y2="899.5" stroke="#e3e6f0" stroke-width="1" stroke-dasharray="8.6,4.4"/>
<line x1="900" y1="931.5" x2="1884" y2="931.5" stroke="#e3e6f0" stroke-width="1" stroke-dasharray="8.6,4.4"/>
<line x1="900" y1="962.5" x2="1884" y2="962.5" stroke="#e3e6f0" stroke-width="1" stroke-dasharray="8.6,4.4"/>
<line x1="900" y1="994.5" x2="1884" y2="994.5" stroke="#e3e6f0" stroke-width="1" stroke-dasharray="8.6,4.4"/>
<line x1="900" y1="1025.5" x2="1884" y2="1025.5" stroke="#e0e3ee" stroke-width="1"/>
<path d="M944,1025 V896 A12,12 0 0 1 968,896 V1025 Z" fill="#0070e0"/>
<path d="M1039,1025 V912 A12,12 0 0 1 1063,912 V1025 Z" fill="#0070e0"/>
<path d="M1136,1025 V921 A12,12 0 0 1 1160,921 V1025 Z" fill="#0070e0"/>
<path d="M1234,1025 V930 A12,12 0 0 1 1258,930 V1025 Z" fill="#0070e0"/>
<path d="M1332,1025 V965 A12,12 0 0 1 1356,965 V1025 Z" fill="#0070e0"/>
<path d="M1430,1025 V983 A12,12 0 0 1 1454,983 V1025 Z" fill="#0070e0"/>
<path d="M1528,1025 V993 A12,12 0 0 1 1552,993 V1025 Z" fill="#0070e0"/>
<path d="M1626,1025 V1001 A12,12 0 0 1 1650,1001 V1025 Z" fill="#0070e0"/>
<path d="M1724,1025 V1009 A12,12 0 0 1 1748,1009 V1025 Z" fill="#0070e0"/>
<path d="M1822,1025 V1015 A12,12 0 0 1 1846,1015 V1025 Z" fill="#0070e0"/>
</svg>
<div class="t" style="left:871.0px;width:20px;text-align:center;top:862.2px;font-size:12px;line-height:14px;color:#8c95b0;font-weight:normal;">5</div>
<div class="t" style="left:871.0px;width:20px;text-align:center;top:896.2px;font-size:12px;line-height:14px;color:#8c95b0;font-weight:normal;">4</div>
<div class="t" style="left:871.0px;width:20px;text-align:center;top:927.4px;font-size:12px;line-height:14px;color:#8c95b0;font-weight:normal;">3</div>
<div class="t" style="left:871.0px;width:20px;text-align:center;top:957.2px;font-size:12px;line-height:14px;color:#8c95b0;font-weight:normal;">2</div>
<div class="t" style="left:871.0px;width:20px;text-align:center;top:988.4px;font-size:12px;line-height:14px;color:#8c95b0;font-weight:normal;">1</div>
<div class="t" style="left:871.0px;width:20px;text-align:center;top:1019.0px;font-size:12px;line-height:14px;color:#8c95b0;font-weight:normal;">0</div>
<div class="t" style="left:916.0px;width:80px;text-align:center;top:1028.0px;font-size:11px;line-height:14px;color:#8c95b0;font-weight:normal;letter-spacing:-0.2px;">test</div>
<div class="t" style="left:1011.0px;width:80px;text-align:center;top:1028.0px;font-size:11px;line-height:14px;color:#8c95b0;font-weight:normal;letter-spacing:-0.2px;">yanshi01</div>
<div class="t" style="left:1108.0px;width:80px;text-align:center;top:1028.0px;font-size:11px;line-height:14px;color:#8c95b0;font-weight:normal;letter-spacing:-0.2px;">yanshi01</div>
<div class="t" style="left:1206.0px;width:80px;text-align:center;top:1028.0px;font-size:11px;line-height:14px;color:#8c95b0;font-weight:normal;letter-spacing:-0.2px;">yanshi01</div>
<div class="t" style="left:1304.0px;width:80px;text-align:center;top:1028.0px;font-size:11px;line-height:14px;color:#8c95b0;font-weight:normal;letter-spacing:-0.2px;">yanshi01</div>
<div class="t" style="left:1402.0px;width:80px;text-align:center;top:1028.0px;font-size:11px;line-height:14px;color:#8c95b0;font-weight:normal;letter-spacing:-0.2px;">yanshi01</div>
<div class="t" style="left:1500.0px;width:80px;text-align:center;top:1028.0px;font-size:11px;line-height:14px;color:#8c95b0;font-weight:normal;letter-spacing:-0.2px;">yanshi01</div>
<div class="t" style="left:1598.0px;width:80px;text-align:center;top:1028.0px;font-size:11px;line-height:14px;color:#8c95b0;font-weight:normal;letter-spacing:-0.2px;">yanshi01</div>
<div class="t" style="left:1696.0px;width:80px;text-align:center;top:1028.0px;font-size:11px;line-height:14px;color:#8c95b0;font-weight:normal;letter-spacing:-0.2px;">yanshi01</div>
<div class="t" style="left:1794.0px;width:80px;text-align:center;top:1028.0px;font-size:11px;line-height:14px;color:#8c95b0;font-weight:normal;letter-spacing:-0.2px;">yanshi01</div>
<svg style="left:0;top:0" width="1920" height="1400" viewBox="0 0 1920 1400">
<line x1="250" y1="1167.5" x2="832" y2="1167.5" stroke="#e3e6f0" stroke-width="1" stroke-dasharray="8.6,4.4"/>
<line x1="250" y1="1200.5" x2="832" y2="1200.5" stroke="#e3e6f0" stroke-width="1" stroke-dasharray="8.6,4.4"/>
<line x1="250" y1="1233.5" x2="832" y2="1233.5" stroke="#e3e6f0" stroke-width="1" stroke-dasharray="8.6,4.4"/>
<line x1="250" y1="1266.5" x2="832" y2="1266.5" stroke="#e3e6f0" stroke-width="1" stroke-dasharray="8.6,4.4"/>
<line x1="250" y1="1299.5" x2="832" y2="1299.5" stroke="#e3e6f0" stroke-width="1" stroke-dasharray="8.6,4.4"/>
<line x1="250" y1="1332.5" x2="834" y2="1332.5" stroke="#6e6e6e" stroke-width="1"/>
<path d="M250,1327.8 C251.33,1327.80 255.67,1327.90 258,1327.8 C260.33,1327.70 259.17,1328.45 264,1327.2 C268.83,1325.95 278.00,1323.27 287,1320.3 C296.00,1317.33 307.08,1313.17 318,1309.4 C328.92,1305.63 344.80,1299.92 352.5,1297.7 C360.20,1295.48 357.95,1296.10 364.2,1296.1 C370.45,1296.10 382.03,1296.80 390,1297.7 C397.97,1298.60 405.33,1300.45 412,1301.5 C418.67,1302.55 424.55,1303.33 430,1304 C435.45,1304.67 439.70,1306.50 444.7,1305.5 C449.70,1304.50 454.45,1301.92 460,1298 C465.55,1294.08 471.95,1287.27 478,1282 C484.05,1276.73 491.30,1270.23 496.3,1266.4 C501.30,1262.57 504.10,1261.08 508,1259 C511.90,1256.92 514.37,1255.27 519.7,1253.9 C525.03,1252.53 534.78,1251.38 540,1250.8 C545.22,1250.22 545.93,1251.05 551,1250.4 C556.07,1249.75 563.13,1249.23 570.4,1246.9 C577.67,1244.57 586.80,1240.17 594.6,1236.4 C602.40,1232.63 610.97,1226.93 617.2,1224.3 C623.43,1221.67 625.00,1218.98 632,1220.6 C639.00,1222.22 650.37,1228.82 659.2,1234 C668.03,1239.18 676.93,1247.13 685,1251.7 C693.07,1256.27 698.85,1258.98 707.6,1261.4 C716.35,1263.82 728.08,1267.82 737.5,1266.2 C746.92,1264.58 755.63,1257.35 764.1,1251.7 C772.57,1246.05 776.95,1242.73 788.3,1232.3 C799.65,1221.87 824.88,1196.30 832.2,1189.1" fill="none" stroke="#3a8ee6" stroke-width="1.3"/>
</svg>
<div class="t" style="left:228px;top:1160.3px;font-size:12px;line-height:14px;color:#8c95b0;font-weight:normal;">1</div>
<div class="t" style="left:228px;top:1193.3px;font-size:12px;line-height:14px;color:#8c95b0;font-weight:normal;">0.8</div>
<div class="t" style="left:228px;top:1226.3px;font-size:12px;line-height:14px;color:#8c95b0;font-weight:normal;">0.6</div>
<div class="t" style="left:228px;top:1259.6px;font-size:12px;line-height:14px;color:#8c95b0;font-weight:normal;">0.4</div>
<div class="t" style="left:228px;top:1292.6px;font-size:12px;line-height:14px;color:#8c95b0;font-weight:normal;">0.2</div>
<div class="t" style="left:228px;top:1325.6px;font-size:12px;line-height:14px;color:#8c95b0;font-weight:normal;">0</div>
<div class="t" style="left:234.0px;width:60px;text-align:center;top:1335.0px;font-size:12px;line-height:14px;color:#8c95b0;font-weight:normal;letter-spacing:-0.4px;">09-28</div>
<div class="t" style="left:327.0px;width:60px;text-align:center;top:1335.0px;font-size:12px;line-height:14px;color:#8c95b0;font-weight:normal;letter-spacing:-0.4px;">09-29</div>
<div class="t" style="left:419.0px;width:60px;text-align:center;top:1335.0px;font-size:12px;line-height:14px;color:#8c95b0;font-weight:normal;letter-spacing:-0.4px;">09-30</div>
<div class="t" style="left:511.5px;width:60px;text-align:center;top:1335.0px;font-size:12px;line-height:14px;color:#8c95b0;font-weight:normal;letter-spacing:-0.4px;">10-01</div>
<div class="t" style="left:604.0px;width:60px;text-align:center;top:1335.0px;font-size:12px;line-height:14px;color:#8c95b0;font-weight:normal;letter-spacing:-0.4px;">10-02</div>
<div class="t" style="left:697.0px;width:60px;text-align:center;top:1335.0px;font-size:12px;line-height:14px;color:#8c95b0;font-weight:normal;letter-spacing:-0.4px;">10-03</div>
<div class="t" style="left:788.0px;width:60px;text-align:center;top:1335.0px;font-size:12px;line-height:14px;color:#8c95b0;font-weight:normal;letter-spacing:-0.4px;">10-04</div>
<svg style="left:0;top:0" width="1920" height="1400" viewBox="0 0 1920 1400">
<path d="M1036.00,1168.00 A57,57 0 0 1 1088.47,1202.73 L1077.42,1207.42 A45,45 0 0 0 1036.00,1180.00 Z" fill="#0070e0"/>
<path d="M1088.47,1202.73 A57,57 0 1 1 1035.99,1168.00 L1035.99,1180.00 A45,45 0 1 0 1077.42,1207.42 Z" fill="#fd9a00"/>
<path d="M1072,1179 L1080.2,1168.4 H1101.8" fill="none" stroke="#c8ccd8" stroke-width="1"/>
<path d="M1032.5,1282.4 L1041,1293 H1062.8" fill="none" stroke="#c8ccd8" stroke-width="1"/>
<rect x="1250" y="1245.2" width="12" height="12" fill="#0070e0"/>
<rect x="1250" y="1285.2" width="12" height="12" fill="#fd9a00"/>
<rect x="1528" y="1195" width="332" height="8" rx="4" fill="#eff2f8"/>
<rect x="1528" y="1195" width="80" height="8" rx="4" fill="#0070e0"/>
<rect x="1528" y="1247" width="332" height="8" rx="4" fill="#eff2f8"/>
<rect x="1528" y="1247" width="174" height="8" rx="4" fill="#0070e0"/>
<rect x="1528" y="1299" width="332" height="8" rx="4" fill="#eff2f8"/>
<rect x="1528" y="1299" width="299" height="8" rx="4" fill="#0070e0"/>
</svg>
<div class="t" style="left:1102.3px;top:1159.9px;font-size:14px;line-height:20px;color:#333;font-weight:normal;">CPU节点数</div>
<div class="t" style="left:1063.4px;top:1282.0px;font-size:14px;line-height:20px;color:#333;font-weight:normal;">GPU节点数</div>
<div class="t" style="left:1275px;top:1241.5px;font-size:14px;line-height:20px;color:#333;font-weight:normal;">CPU节点数</div>
<div class="t" style="left:1275px;top:1281.5px;font-size:14px;line-height:20px;color:#333;font-weight:normal;">GPU节点数</div>
<div class="t" style="left:1528px;top:1129.0px;font-size:14px;line-height:20px;color:#333;font-weight:normal;">资源类型</div>
<div class="t" style="left:1560px;width:300px;text-align:right;top:1129.0px;font-size:14px;line-height:20px;color:#333;font-weight:normal;">使用量（已用/可用）</div>
<div class="t" style="left:1528px;top:1166.0px;font-size:14px;line-height:20px;color:#333;font-weight:normal;">CPU</div>
<div class="t" style="left:1560px;width:300px;text-align:right;top:1166.0px;font-size:14px;line-height:20px;color:#333;font-weight:normal;">80核/692核</div>
<div class="t" style="left:1528px;top:1218.0px;font-size:14px;line-height:20px;color:#333;font-weight:normal;">内存</div>
<div class="t" style="left:1560px;width:300px;text-align:right;top:1218.0px;font-size:14px;line-height:20px;color:#333;font-weight:normal;">312GB/794GB</div>
<div class="t" style="left:1528px;top:1269.5px;font-size:14px;line-height:20px;color:#333;font-weight:normal;">GPU</div>
<div class="t" style="left:1560px;width:300px;text-align:right;top:1269.5px;font-size:14px;line-height:20px;color:#333;font-weight:normal;">36卡/4卡</div>
</body></html>
